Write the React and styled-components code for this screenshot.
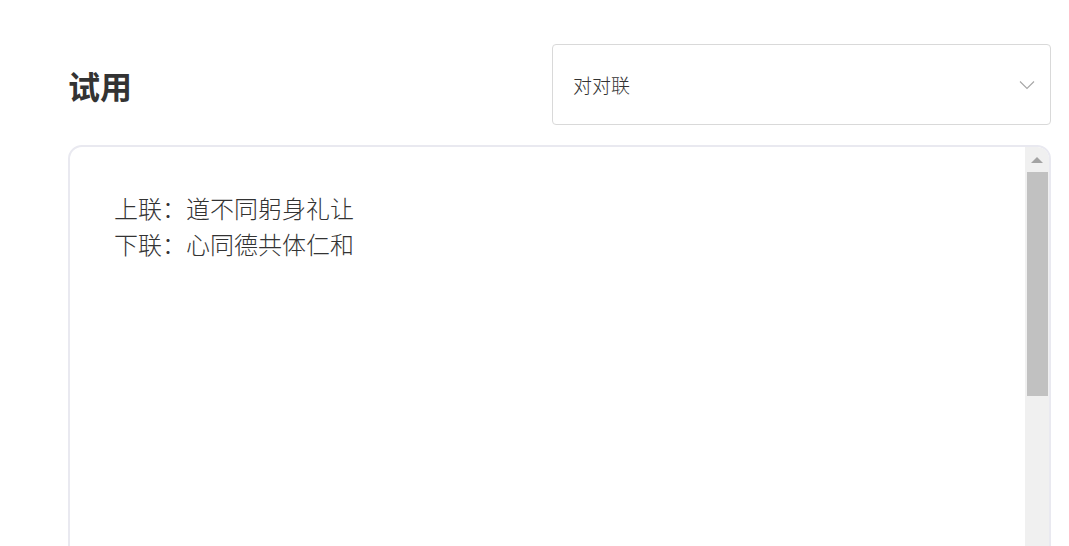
import React from 'react'
import styled, { createGlobalStyle } from 'styled-components'

const GlobalStyle = createGlobalStyle`
  html, body {
    margin: 0;
    padding: 0;
    background: #fff;
    overflow: hidden;
  }
  body {
    font-family: 'Noto Sans', 'Noto Sans CJK SC', sans-serif;
  }
`

const Page = styled.main`
  padding: 44px 18px 0 68px;
  display: flex;
  flex-direction: column;
  gap: 20px;
`

const HeaderRow = styled.header`
  display: flex;
  justify-content: space-between;
  align-items: center;
`

const Title = styled.h2`
  margin: 0;
  font-size: 32px;
  font-weight: 700;
  color: #333;
  font-family: 'Noto Sans CJK SC', sans-serif;
  line-height: 1;
`

const Select = styled.div`
  width: 499px;
  height: 81px;
  box-sizing: border-box;
  border: 1px solid #d9d9d9;
  border-radius: 4px;
  display: flex;
  align-items: center;
  justify-content: space-between;
  padding: 0 15px 0 20px;
  font-size: 19px;
  color: #333;
  font-family: 'Noto Sans CJK SC', sans-serif;
  font-weight: 300;
`

const Chevron = () => (
  <svg width='16' height='10' viewBox='0 0 16 10' fill='none'>
    <path d='M1 1.5 L8 8.5 L15 1.5' stroke='#a6a6a6' strokeWidth='1.1' />
  </svg>
)

const Editor = styled.section`
  height: 460px;
  border: 2px solid #e9e9f0;
  border-radius: 14px;
  display: flex;
  overflow: hidden;
`

const Content = styled.div`
  flex: 1;
  padding: 43px 44px;
  font-size: 24px;
  line-height: 36px;
  color: #333;
  font-family: 'Noto Sans CJK SC', serif;
  font-weight: 300;
`

const Line = styled.div`
  white-space: nowrap;
`

const ScrollTrack = styled.div`
  width: 24px;
  background: #f0f0f0;
  display: flex;
  flex-direction: column;
  align-items: center;
`

const ScrollArrow = styled.div`
  height: 25px;
  width: 100%;
  display: flex;
  align-items: center;
  justify-content: center;
  &::before {
    content: '';
    border-left: 6px solid transparent;
    border-right: 6px solid transparent;
    border-bottom: 6px solid #a3a3a3;
  }
`

const ScrollThumb = styled.div`
  width: 21px;
  height: ${(p) => p.size}px;
  background: #c1c1c1;
`

const App = () => {
  return (
    <>
      <GlobalStyle />
      <Page>
        <HeaderRow>
          <Title>试用</Title>
          <Select>
            <span>对对联</span>
            <Chevron />
          </Select>
        </HeaderRow>
        <Editor>
          <Content>
            <Line>上联：道不同躬身礼让</Line>
            <Line>下联：心同德共体仁和</Line>
          </Content>
          <ScrollTrack>
            <ScrollArrow />
            <ScrollThumb size={224} />
          </ScrollTrack>
        </Editor>
      </Page>
    </>
  )
}

export default App
